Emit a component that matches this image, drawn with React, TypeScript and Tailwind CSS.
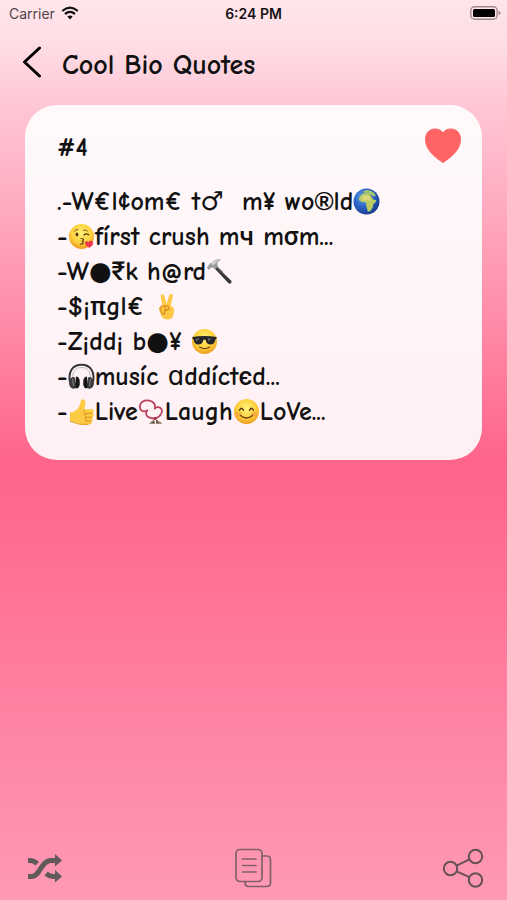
import { useId, useState } from "react";
import type { ReactNode } from "react";

function Glyph({ label, children }: { label: string; children: ReactNode }) {
  return (
    <svg role="img" aria-label={label} viewBox="0 0 27 27" className="inline-block size-[27px] shrink-0 align-[-5px]">
      {children}
    </svg>
  );
}

function Face({ label, children }: { label: string; children: ReactNode }) {
  const id = useId();
  return (
    <Glyph label={label}>
      <defs>
        <radialGradient id={id} cx="50%" cy="38%" r="62%">
          <stop offset="0" stopColor="#fff27a" />
          <stop offset="0.6" stopColor="#fdd33f" />
          <stop offset="1" stopColor="#ee9b1c" />
        </radialGradient>
      </defs>
      <circle cx="13.5" cy="13.5" r="12.5" fill={`url(#${id})`} />
      {children}
    </Glyph>
  );
}

function Globe() {
  const id = useId();
  return (
    <Glyph label="globe">
      <defs>
        <radialGradient id={id} cx="38%" cy="35%" r="68%">
          <stop offset="0" stopColor="#72a7e8" />
          <stop offset="0.5" stopColor="#2e66c9" />
          <stop offset="1" stopColor="#173a8c" />
        </radialGradient>
      </defs>
      <circle cx="13.5" cy="13.5" r="13" fill={`url(#${id})`} />
      <path d="M7 8.5 9 6l3-.7 3 .2 2.5 1.2 1.3 2.6 1.7 2.4 2.8.3-.6 2-2.6 2.4-.4 3-1.8 2.8-1.8 1.6-1.5-.6-.7-3.2-.8-2.6.2-2.2-1.4-1.3-3.4.2-2.3-2.2L6 10z" fill="#b9cb62" />
      <path d="M10 3.6 13 2l4.5.4 3.8 2.6 1.6 3-2.6.6-2-1.8-2.2.3-1.7-1.9-2.4.3z" fill="#9fc272" />
      <path d="m10 8 4-1 3 2 1 4-3-1-3 1-3-2z" fill="#d9d77c" />
    </Glyph>
  );
}

function Kiss() {
  return (
    <Face label="face blowing a kiss">
      <path d="M6.2 8.4q1.5-2.2 3.7-2M15.5 7.2q2.6-.9 4 .9" fill="none" stroke="#8a5315" strokeWidth="1" strokeLinecap="round" />
      <ellipse cx="9" cy="11.5" rx="1.4" ry="2" fill="#5b3410" />
      <path d="M16 12q2.2-2 4.6-.2" fill="none" stroke="#5b3410" strokeWidth="1.3" strokeLinecap="round" />
      <path d="M13 15.5q3.2 0 2.4 1.7-.5.9-1.6 1 1.6.2 1.5 1.4-.2 1.7-2.7 1.5" fill="none" stroke="#6d3b10" strokeWidth="1.2" strokeLinecap="round" />
      <path d="M21.2 24.8c-3-1.3-4.6-3.2-4.2-5.2.4-1.7 2.6-1.9 3.5-.3 1-1.7 3.3-1.9 4.3-.5 1.3 1.9-.5 4.6-3.6 6z" fill="#ed3a4a" />
    </Face>
  );
}

function Hammer() {
  return (
    <Glyph label="hammer">
      <path d="m10.5 8.5 14.8 14.2q.9 1.5-.4 2.6-1.3.9-2.6-.3L8.6 10.5z" fill="#39383b" />
      <path d="m11 9 6 5.8" stroke="#69696d" strokeWidth="1.3" />
      <path d="M1 9.6 4.2 5l1.6-.3Q8.2 1 13.4 1.2l1.2.7-2.9 2.2-.4 2.2 1 1.8-3.4 3.2L7 9.4l-1.6.1-2.6 2.6z" fill="#9b9da0" />
      <path d="M4.8 6Q8 2 13 1.7L10 4.5 7.5 7z" fill="#d6d7d8" />
    </Glyph>
  );
}

function Victory() {
  return (
    <Glyph label="victory hand">
      <path d="M8.3 12 6.7 3.6Q6.5 1.5 8.1 1.2t2.3 1.7l2.3 8 2.4-8.4Q15.8.6 17.5 1.1t1.3 2.4l-2.2 9.3 2.4 1.5q1.5 1.2 1.2 3.8l-1 4.7q-1 3.6-5.6 3.6-4.2 0-6.1-3.2l-2-5q-.9-2.6 1-4.6z" fill="#fdc846" />
      <path d="m5.8 15 2.4-2q1.7-.8 2.5 1l1 3.6M10.6 13.8q2.6-1.8 3.8 0l.8 2.5-5 1.8M15.1 16q-4.7.4-4.6 4.2M6 15.2l2 5q1.2 1.5 2.3.7" fill="none" stroke="#da8b1d" strokeWidth="1.2" strokeLinecap="round" strokeLinejoin="round" />
    </Glyph>
  );
}

function Cool() {
  return (
    <Face label="smiling face with sunglasses">
      <path d="M1.3 9q12.2-2 24.4 0l-.4 2-1 .4c-.4 3.4-2 5-4.7 5-3 0-4.6-1.7-5-4.7h-2.2c-.4 3-2 4.7-5 4.7-2.7 0-4.3-1.6-4.7-5l-1-.4z" fill="#242529" />
      <path d="m5 10.5 4 .1-4 3zM17 10.5h4l-4 3z" fill="#62686c" />
      <path d="M8.7 19q5 3.3 9.8 0" fill="none" stroke="#704111" strokeWidth="1.3" strokeLinecap="round" />
    </Face>
  );
}

function Headphones() {
  return (
    <Glyph label="headphones">
      <path d="M2.2 20C-.5 9 4.5 1.8 13.5 1.8S27.5 9 24.8 20" fill="none" stroke="#37373b" strokeWidth="2" />
      <path d="M5 16C4 8.5 7.5 4.5 13.5 4.5S23 8.5 22 16" fill="none" stroke="#a0a0a6" strokeWidth="0.7" />
      <path d="M2 16.5q2-3.5 5-2l1.5 10q-3.5 2.6-6.3-.5Q0 20 2 16.5zM25 16.5q-2-3.5-5-2l-1.5 10q3.5 2.6 6.3-.5Q27 20 25 16.5z" fill="#3c3c40" />
      <path d="M8 13.5q3 0 3.7 4.2t-1.3 7q-1.5 1-2.9 0zM19 13.5q-3 0-3.7 4.2t1.3 7q1.5 1 2.9 0z" fill="#151518" />
      <path d="m4.5 16 1 7M22.5 16l-1 7" stroke="#88888d" strokeWidth="0.9" />
    </Glyph>
  );
}

function ThumbsUp() {
  return (
    <Glyph label="thumbs up">
      <path d="M2 14.5q4.6-.1 7.2-3.2 2.9-3.5 3.5-7.8.4-2.6 2.3-2.3 2.9.5 2.4 5l-1 5h7q2.7.2 2.5 2.3-.2 1.6-1.5 1.8 1.6.6 1.4 2.2-.2 1.5-1.8 1.8 1.3.7 1 2.1-.2 1.3-1.7 1.5 1 .7.6 1.800-.5 1.500-3 1.500h-6q-4.600 0-7-1.700L2 23.600z" fill="#fdcb43" />
      <path d="M16.4 12.3q-1.5 1.4.2 3.1h7.500M17.600 15.500q-1.600 1.800 0 3.800h6M17.800 19.500q-1.200 1.800.2 3.500h5" fill="none" stroke="#dc921f" strokeWidth="1" strokeLinecap="round" />
      <path d="M2 23.5q3 .1 5.500 1.500t7 1.400h6" fill="none" stroke="#e7a22b" strokeWidth="1.2" />
    </Glyph>
  );
}

function Beads() {
  return (
    <Glyph label="prayer beads">
      <path d="M17 20.5q4.5-1.200 6.300-5 1.700-4-1.200-5.800-2.400-1.200-5.200.5 1-6-5.600-7.500Q4.500 1.500 2.300 6.500q-1.500 4.300 1.700 6.300 3 1.500 5.700-1-3.300 4 .2 7 2.700 2 7 1.500z" fill="none" stroke="#b93f5c" strokeWidth="1.7" />
      <circle cx="17" cy="20.5" r="1.6" fill="#a73350" />
      <path d="m16 21.5-5 4 6 .3zM18 21.500l6.500 4-6.500.3z" fill="#695646" />
      <path d="m15.5 22.5-2.500 2.500M19 22.500l3 2.500" stroke="#b9a27b" strokeWidth="0.8" />
    </Glyph>
  );
}

function Smile() {
  return (
    <Face label="smiling face">
      <ellipse cx="5.8" cy="16" rx="3.2" ry="2.3" fill="#f59a45" opacity=".6" />
      <ellipse cx="21.2" cy="16" rx="3.2" ry="2.3" fill="#f59a45" opacity=".6" />
      <path d="M6.5 12.3q1.8-4.2 4 0M16.5 12.3q2.2-4.2 4 0" fill="none" stroke="#5b3410" strokeWidth="1.4" strokeLinecap="round" />
      <path d="M7.5 17.5q6 5 12 0" fill="none" stroke="#704111" strokeWidth="1.3" strokeLinecap="round" />
    </Face>
  );
}

/* Symbols and foreign letters the handwriting face does not cover. */
function Symbol({ children }: { children: string }) {
  return <span className="font-['Roboto','Open_Sans','DejaVu_Sans',sans-serif] leading-none font-medium">{children}</span>;
}

function StatusBar() {
  return (
    <div className="grid h-[26px] grid-cols-3 items-center px-[6px] font-['Inter',sans-serif] text-[14px]">
      <div className="flex items-center gap-[6px] pl-[3px] text-[#50444a]">
        <span>Carrier</span>
        <svg viewBox="0 0 18 14" className="h-[14px] w-[18px]" aria-label="Wi-Fi" role="img">
          <path d="M1.2 5Q9-1.8 16.8 5M4 8q5-4.2 10 0" fill="none" stroke="#111" strokeWidth="2.3" />
          <path d="M6.3 10.6q2.7-2.2 5.4 0L9 13.5z" fill="#111" />
        </svg>
      </div>
      <span className="text-center font-semibold text-[#181316]">6:24 PM</span>
      <svg viewBox="0 0 31 14" className="h-[14px] w-[31px] justify-self-end" aria-label="Battery full" role="img">
        <rect x="0.8" y="0.8" width="26.4" height="12.4" rx="3.8" fill="none" stroke="#9e8b91" strokeWidth="1.4" />
        <rect x="3" y="3" width="22" height="8" rx="1.5" fill="#000" />
        <path d="M28.6 4.7q2 .8 2 2.3t-2 2.3z" fill="#9e8b91" />
      </svg>
    </div>
  );
}

export default function App() {
  const [liked, setLiked] = useState(true);
  return (
    <div className="flex min-h-screen flex-col bg-[linear-gradient(180deg,#ffe6eb_0%,#ffdde5_5%,#ffc6d4_12%,#ff658b_51%,#ff668c_54%,#ff9ab4_100%)] font-['Comic_Neue','Lato','DejaVu_Sans',sans-serif] text-[#111]">
      <StatusBar />
      <header className="flex h-[79px] items-start gap-[19px] pt-[18px] pl-[22px]">
        <button type="button" aria-label="Back" className="flex h-[36px] w-[21px] items-center">
          <svg viewBox="0 0 21 32" className="h-[32px] w-[21px]">
            <path d="M17.5 2 2.5 16l15 14" fill="none" stroke="#000" strokeWidth="3" strokeLinecap="round" strokeLinejoin="round" />
          </svg>
        </button>
        <h1 className="pt-[3px] text-[28px] leading-[36px] font-bold">Cool Bio Quotes</h1>
      </header>

      <main className="flex-1 px-[25px]">
        <article className="rounded-[32px] bg-white/90 px-[32px] pt-[23px] pb-[30px]">
          <div className="flex h-[57px] items-start justify-between">
            <h2 className="text-[26px] leading-[40px] font-bold">#4</h2>
            <button type="button" aria-label="Favourite" aria-pressed={liked} onClick={() => setLiked(!liked)} className="-mr-3">
              <svg viewBox="0 0 38 36" className="h-[36px] w-[38px]">
                <path d="M19 34.500C8 27.500 1.500 20 1.500 11.500 1.500 5 5.600 1 11 1c3.600 0 6.500 1.300 8 4.200C20.500 2.300 23.400 1 27 1c5.400 0 9.500 4 9.500 10.500 0 8.500-6.500 16-17.500 23z" fill={liked ? "#ff6464" : "none"} stroke="#ff6464" />
              </svg>
            </button>
          </div>
          <div className="text-[26px] leading-[35px] font-bold">
            <p className="h-[35px] whitespace-pre">.-W€l¢om€ t<Symbol>♂</Symbol>  m¥ wo<span className="font-['Liberation_Sans',sans-serif] leading-none">®</span>ld<Globe /></p>
            <p className="h-[35px] whitespace-pre">-<Kiss />fírst crush m<Symbol>ч</Symbol> m<Symbol>σ</Symbol>m...</p>
            <p className="h-[35px] whitespace-pre">-W<Symbol>●</Symbol><Symbol>₹</Symbol>k h@rd<Hammer /></p>
            <p className="h-[35px] whitespace-pre">-$¡<Symbol>π</Symbol>gl€ <Victory /></p>
            <p className="h-[35px] whitespace-pre">-Z¡dd¡ b<Symbol>●</Symbol>¥ <Cool /></p>
            <p className="h-[35px] whitespace-pre">-<Headphones />musíc <Symbol>ɑ</Symbol>ddíct<Symbol>є</Symbol>d...</p>
            <p className="h-[35px] whitespace-pre">-<ThumbsUp />Live<Beads />Laugh<Smile />LoVe...</p>
          </div>
        </article>
      </main>

      <footer className="flex h-[64px] items-center justify-between pr-[23px] pl-[26px] text-[#62595a]">
        <button type="button" aria-label="Shuffle">
          <svg viewBox="0 0 38 32" className="h-[32px] w-[38px]">
            <path d="M2 8.5h2q4 0 7.2 3.2M2 24.5h4c8 0 9-16 19-16h5M20 21.5q3.5 3 7 3h3" fill="none" stroke="currentColor" strokeWidth="5" />
            <path d="m29 2 7 6.5-7 6zM29 18l7 6.5-7 6z" fill="currentColor" />
          </svg>
        </button>
        <button type="button" aria-label="Copy">
          <svg viewBox="0 0 38 40" className="h-[40px] w-[38px]" fill="none" stroke="#80606a" strokeWidth="1.7" strokeLinecap="round">
            <rect x="2" y="1.5" width="26" height="32" rx="4" />
            <path d="M28 8h4.5q4 0 4 4v22.5q0 4-4 4H15q-4 0-4-4v-1M8.5 11h13.5M8.5 17.5h13.5M8.5 24h13.5" />
          </svg>
        </button>
        <button type="button" aria-label="Share">
          <svg viewBox="0 0 42 40" className="h-[40px] w-[42px]" fill="none" stroke="#655056" strokeWidth="2">
            <circle cx="8.5" cy="20.5" r="6.7" />
            <circle cx="33.5" cy="8.5" r="6.7" />
            <circle cx="33.5" cy="32" r="6.7" />
            <path d="m14.6 17.6 12.8-6.2M14.6 23.4l12.8 5.7" />
          </svg>
        </button>
      </footer>
    </div>
  );
}
